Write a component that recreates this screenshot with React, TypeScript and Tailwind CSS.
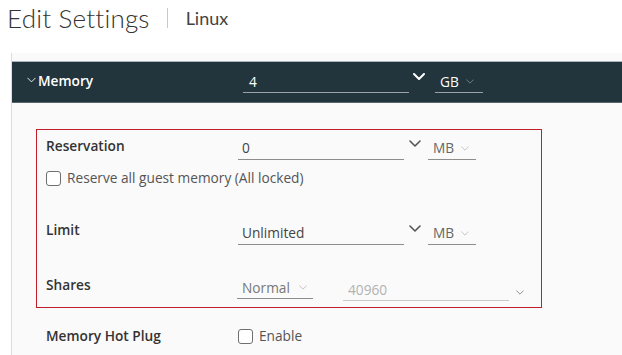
import React from "react";

const Chev = ({ w, h, color, sw }: { w: number; h: number; color: string; sw: number }) => (
  <svg width={w} height={h} viewBox="0 0 12 7" fill="none" className="block">
    <path d="M1 1 L6 6 L11 1" stroke={color} strokeWidth={sw} strokeLinecap="round" strokeLinejoin="round" />
  </svg>
);

const Checkbox = () => (
  <div className="w-[15px] h-[15px] rounded-[3px] border border-[#6f6f6f] bg-white" />
);

function NumInput({ value, dark, width, muted, pl }: { value: string; dark?: boolean; width: number; muted?: boolean; pl: number }) {
  return (
    <div
      className={`h-[22px] flex items-center border-b ${dark ? "border-[#9aa3a8] text-white" : "border-[#8d8d8d] text-[#444]"} ${muted ? "text-[#b2b2b2] border-[#c8c8c8]" : ""}`}
      style={{ width, paddingLeft: pl }}
    >
      <span className="text-[13.7px] leading-none">{value}</span>
    </div>
  );
}

function Unit({ value, dark, width }: { value: string; dark?: boolean; width: number }) {
  return (
    <div
      className={`h-[22px] flex items-center gap-[7px] pl-[5px] border-b ${dark ? "border-[#9aa3a8] text-white" : "border-[#8d8d8d] text-[#666]"}`}
      style={{ width }}
    >
      <span className="text-[13.7px] leading-none">{value}</span>
      <Chev w={8} h={5} color={dark ? "#9aa3a8" : "#aaa"} sw={1} />
    </div>
  );
}

export default function App() {
  return (
    <div className="w-[622px] h-[355px] overflow-hidden bg-white text-[#333]" style={{ fontFamily: "'Open Sans', Lato, sans-serif" }}>
      {/* Title */}
      <div className="h-[53px] flex items-start pl-[7px] pt-[3px]" style={{ fontFamily: "Lato, sans-serif" }}>
        <span className="text-[26px] font-light leading-[30px] text-[#333] tracking-[0.2px]">Edit Settings</span>
        <div className="w-px h-[20px] bg-[#c8c8c8] ml-[17px] mt-[5px]" />
        <span className="text-[18px] leading-[30px] text-[#444] ml-[18px]">Linux</span>
      </div>

      {/* Panel */}
      <div className="ml-[11px] border-l border-[#dcdcdc] bg-[#fafafa] h-[302px]">
        <div className="h-[8px]" />
        {/* Dark header */}
        <div className="h-[42px] bg-[#22343c] border-t border-[#aab7bd] border-b border-b-[#56666d] flex items-center">
          <div className="w-[231px] flex items-center pl-[15px] pb-[3px]">
            <Chev w={9} h={6} color="#ffffff" sw={1.2} />
            <span className="ml-[2px] text-[13.7px] font-semibold text-white leading-none">Memory</span>
          </div>
          <NumInput value="4" dark width={166} pl={6} />
          <div className="ml-[4px] mb-[12px]">
            <Chev w={12} h={7} color="#ffffff" sw={2} />
          </div>
          <div className="ml-[10px]">
            <Unit value="GB" dark width={48} />
          </div>
        </div>

        {/* Red box */}
        <div className="ml-[24px] mt-[26px] w-[506px] border border-[#c21d2a] pb-[6px]">
          <div className="h-[32px] flex items-center">
            <div className="w-[201px] pl-[9px] text-[13.7px] font-semibold leading-none">Reservation</div>
            <div className="mt-[5px]">
              <NumInput value="0" width={166} pl={4} />
            </div>
            <div className="ml-[5px] mb-[6px]">
              <Chev w={12} h={7} color="#555" sw={1.6} />
            </div>
            <div className="ml-[7px] mt-[5px]">
              <Unit value="MB" width={48} />
            </div>
          </div>
          <div className="h-[32px] flex items-center pl-[9px]">
            <Checkbox />
            <span className="ml-[6px] text-[13.7px] text-[#555] leading-none">Reserve all guest memory (All locked)</span>
          </div>
          <div className="h-[20px]" />
          <div className="h-[32px] flex items-center">
            <div className="w-[201px] pl-[9px] text-[13.7px] font-semibold leading-none">Limit</div>
            <div className="mt-[7px]">
              <NumInput value="Unlimited" width={166} pl={4} />
            </div>
            <div className="ml-[5px] mb-[4px]">
              <Chev w={12} h={7} color="#555" sw={1.6} />
            </div>
            <div className="ml-[7px] mt-[7px]">
              <Unit value="MB" width={48} />
            </div>
          </div>
          <div className="h-[23px]" />
          <div className="h-[32px] flex items-center">
            <div className="w-[200px] pl-[9px] text-[13.7px] font-semibold leading-none">Shares</div>
            <div className="mt-[6px] h-[22px] w-[76px] flex items-center gap-[9px] pl-[5px] border-b border-[#8d8d8d] text-[#777]">
              <span className="text-[13.7px] leading-none">Normal</span>
              <Chev w={8} h={5} color="#aaa" sw={1} />
            </div>
            <div className="ml-[30px] mt-[10px]">
              <NumInput value="40960" width={166} muted pl={5} />
            </div>
            <div className="ml-[7px] mt-[14px]">
              <Chev w={8} h={5} color="#777" sw={1.2} />
            </div>
          </div>
        </div>

        {/* Memory Hot Plug */}
        <div className="mt-[12px] h-[32px] flex items-center">
          <div className="w-[226px] pl-[34px] text-[13.7px] font-semibold leading-none">Memory Hot Plug</div>
          <Checkbox />
          <span className="ml-[6px] text-[13.7px] text-[#555] leading-none">Enable</span>
        </div>
      </div>
    </div>
  );
}
